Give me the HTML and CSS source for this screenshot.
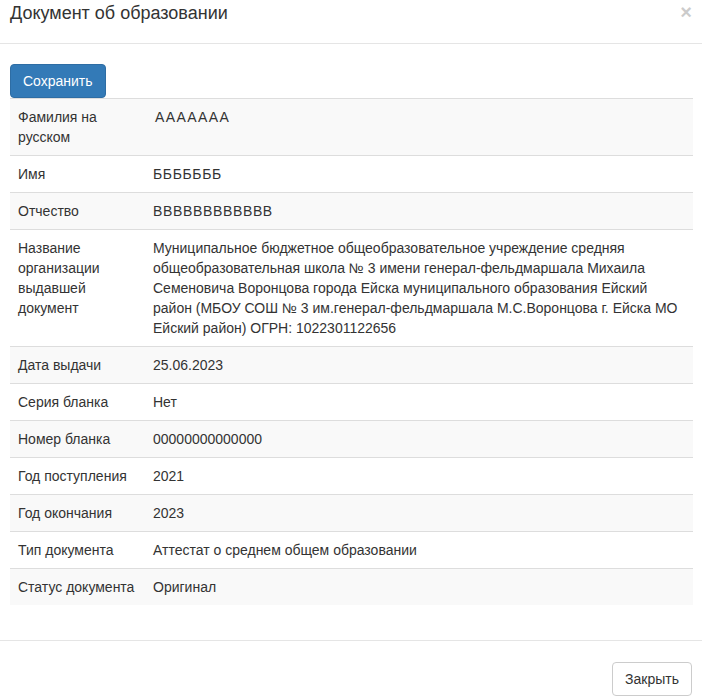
FILE: index.html
```html
<!DOCTYPE html>
<html lang="ru">
<head>
<meta charset="utf-8">
<title>Документ об образовании</title>
<link rel="stylesheet" href="styles.css">
</head>
<body>
<div class="modal">
  <div class="modal-header">
    <button class="close" type="button" aria-label="Закрыть">×</button>
    <h4 class="modal-title">Документ об образовании</h4>
  </div>
  <div class="modal-body">
    <button class="btn btn-primary" type="button">Сохранить</button>
    <table class="table">
      <tbody>
        <tr><td class="label">Фамилия на русском</td><td class="value name-wide">ААААААА</td></tr>
        <tr><td class="label">Имя</td><td class="value name">БББББББ</td></tr>
        <tr><td class="label">Отчество</td><td class="value name">ВВВВВВВВВВВВ</td></tr>
        <tr><td class="label">Название организации выдавшей документ</td><td class="value">Муниципальное бюджетное общеобразовательное учреждение средняя общеобразовательная школа № 3 имени генерал-фельдмаршала Михаила Семеновича Воронцова города Ейска муниципального образования Ейский район (МБОУ СОШ № 3 им.генерал-фельдмаршала М.С.Воронцова г. Ейска МО Ейский район) ОГРН: 1022301122656</td></tr>
        <tr><td class="label">Дата выдачи</td><td class="value">25.06.2023</td></tr>
        <tr><td class="label">Серия бланка</td><td class="value">Нет</td></tr>
        <tr><td class="label">Номер бланка</td><td class="value">00000000000000</td></tr>
        <tr><td class="label">Год поступления</td><td class="value">2021</td></tr>
        <tr><td class="label">Год окончания</td><td class="value">2023</td></tr>
        <tr><td class="label">Тип документа</td><td class="value">Аттестат о среднем общем образовании</td></tr>
        <tr><td class="label">Статус документа</td><td class="value">Оригинал</td></tr>
      </tbody>
    </table>
  </div>
  <div class="modal-footer">
    <button class="btn btn-default" type="button">Закрыть</button>
  </div>
</div>
</body>
</html>
```

FILE: styles.css
```css
* {
  box-sizing: border-box;
}

html, body {
  margin: 0;
  padding: 0;
  background: #fff;
}

body {
  font-family: "Liberation Sans", Arial, sans-serif;
  font-size: 14px;
  line-height: 1.42857143;
  color: #333;
}

.modal {
  width: 702px;
  background: #fff;
}

.modal-header {
  position: relative;
  padding: 1px 10px 16px;
  border-bottom: 1px solid #e5e5e5;
}

.modal-title {
  margin: 0;
  font-size: 18px;
  font-weight: 500;
  line-height: 1.42857143;
  color: #333;
}

.close {
  position: absolute;
  top: 2px;
  right: 10px;
  padding: 0;
  border: 0;
  background: transparent;
  font-family: "Liberation Sans", Arial, sans-serif;
  font-size: 20px;
  font-weight: bold;
  line-height: 1;
  color: #000;
  opacity: 0.2;
  cursor: pointer;
}

.modal-body {
  padding: 20px 9px 15px 10px;
}

.btn {
  display: inline-block;
  margin: 0;
  padding: 6px 12px;
  font-family: inherit;
  font-size: 14px;
  line-height: 1.42857143;
  border: 1px solid transparent;
  border-radius: 4px;
  cursor: pointer;
  vertical-align: middle;
}

.btn-primary {
  color: #fff;
  background: #337ab7;
  border-color: #2e6da4;
}

.btn-default {
  color: #333;
  background: #fff;
  border-color: #ccc;
}

.modal-body .btn-primary {
  display: block;
}

.table {
  width: 100%;
  margin-bottom: 20px;
  border-collapse: collapse;
  border-spacing: 0;
}

.table td {
  padding: 8px;
  vertical-align: top;
  border-top: 1px solid #ddd;
  line-height: 1.42857143;
}

.table tr:nth-child(odd) td {
  background: #f9f9f9;
}

.table .label {
  width: 135px;
}

/* name fields are typed in capitals and shown a little looser */
.table .name {
  letter-spacing: 0.65px;
}

.table .name-wide {
  padding-left: 10px;
  letter-spacing: 1.4px;
}

.modal-footer {
  display: flex;
  justify-content: flex-end;
  padding: 21px 10px 20px;
  border-top: 1px solid #e5e5e5;
}
```
